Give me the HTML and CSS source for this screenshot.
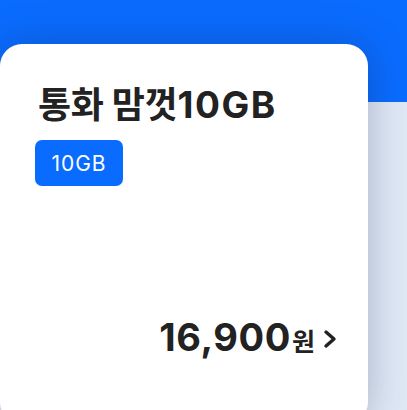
FILE: index.html
```html
<!DOCTYPE html>
<html lang="ko">
<head>
<meta charset="utf-8">
<link rel="stylesheet" href="styles.css">
</head>
<body>
<div class="page">
  <div class="card">
    <h1 class="title">통화 맘껏<span class="title-latin">10GB</span></h1>
    <span class="badge">10GB</span>
    <div class="spacer"></div>
    <div class="price-row">
      <span class="price">16,900</span><span class="won">원</span>
      <svg class="chev" width="16" height="22" viewBox="0 0 16 22"><path d="M4 4 L12 11 L4 18" fill="none" stroke="#222" stroke-width="3.4" stroke-linecap="round" stroke-linejoin="round"/></svg>
    </div>
  </div>
</div>
</body>
</html>
```
FILE: styles.css
```css
html, body {
  margin: 0;
  padding: 0;
}
body {
  width: 407px;
  height: 410px;
  overflow: hidden;
  font-family: Inter, "Noto Sans CJK KR", sans-serif;
}
.page {
  height: 410px;
  background: linear-gradient(to bottom, #0a6cff 0, #0a6cff 102px, #dfe9f6 102px);
  padding-top: 44px;
  box-sizing: border-box;
}
.card {
  width: 368px;
  height: 380px;
  background: #fff;
  border-radius: 22px;
  box-shadow: 0 0 40px rgba(20, 30, 60, 0.28);
  box-sizing: border-box;
  padding: 38px 30px 0 38px;
  display: flex;
  flex-direction: column;
  align-items: flex-start;
}
.title {
  margin: 0;
  font-size: 36px;
  font-weight: 700;
  line-height: 46px;
  color: #222;
  letter-spacing: -0.3px;
}
.title-latin {
  font-size: 37px;
  letter-spacing: 1.5px;
}
.badge {
  margin-top: 12px;
  margin-left: -3px;
  width: 88px;
  height: 46px;
  border-radius: 7px;
  background: #0a6cff;
  color: #fff;
  font-size: 21px;
  display: flex;
  align-items: center;
  justify-content: center;
  letter-spacing: 1px;
}
.spacer {
  height: 128px;
}
.price-row {
  align-self: flex-end;
  display: flex;
  align-items: baseline;
  color: #222;
}
.price {
  font-size: 38px;
  font-weight: 700;
  letter-spacing: 0.6px;
}
.won {
  font-size: 25px;
  font-weight: 700;
  margin-left: 1px;
}
.chev {
  margin-left: 7px;
  align-self: center;
  position: relative;
  top: 2px;
}
```
